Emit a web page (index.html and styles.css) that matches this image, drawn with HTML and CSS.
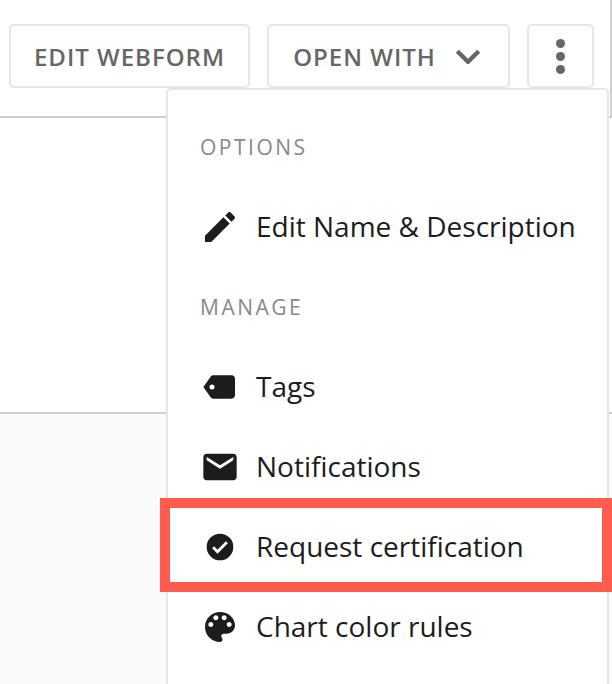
FILE: index.html
```html
<!DOCTYPE html>
<html lang="en">
<head>
<meta charset="utf-8">
<title>Menu</title>
<link rel="stylesheet" href="styles.css">
</head>
<body>
<div class="page">
  <header class="toolbar">
    <button class="btn btn-edit">EDIT WEBFORM</button>
    <button class="btn btn-open">OPEN WITH
      <svg class="chevron" viewBox="0 0 24 14"><path d="M2 2l10 10L22 2" fill="none" stroke="currentColor" stroke-width="4"/></svg>
    </button>
    <button class="btn btn-more" aria-label="More">
      <span class="dot"></span><span class="dot"></span><span class="dot"></span>
    </button>
  </header>
  <section class="panel"></section>
  <section class="footer-area"></section>

  <nav class="menu">
    <div class="heading">OPTIONS</div>
    <div class="item">
      <svg class="icon" viewBox="0 0 24 24"><path d="M3 17.25V21h3.75L17.81 9.94l-3.75-3.75L3 17.25zM20.71 7.04c.39-.39.39-1.02 0-1.41l-2.34-2.34c-.39-.39-1.02-.39-1.41 0l-1.83 1.83 3.75 3.75 1.83-1.83z"/></svg>
      <span class="label">Edit Name &amp; Description</span>
    </div>
    <div class="heading">MANAGE</div>
    <div class="item">
      <svg class="icon" viewBox="0 0 24 24"><path fill-rule="evenodd" d="M6.37 5.84C6.73 5.33 7.33 5 8 5l11 .01c1.1 0 2 .89 2 1.99v10c0 1.1-.9 1.99-2 1.99L8 19c-.67 0-1.27-.33-1.63-.84L2 12l4.37-6.16zM7.2 10.5a1.5 1.5 0 1 0 0 3 1.5 1.5 0 0 0 0-3z"/></svg>
      <span class="label">Tags</span>
    </div>
    <div class="item">
      <svg class="icon" viewBox="0 0 24 24"><path d="M20 4H4c-1.1 0-1.99.9-1.99 2L2 18c0 1.1.9 2 2 2h16c1.1 0 2-.9 2-2V6c0-1.1-.9-2-2-2zm0 4l-8 5-8-5V6l8 5 8-5v2z"/></svg>
      <span class="label">Notifications</span>
    </div>
    <div class="item">
      <svg class="icon" viewBox="0 0 30 30"><path fill-rule="evenodd" d="M15 5a10 10 0 1 0 0 20 10 10 0 0 0 0-20zm-1.9 15l-4-4 1.5-1.5 2.5 2.5 6.3-6.3 1.5 1.5-7.8 7.8z"/></svg>
      <span class="label">Request certification</span>
    </div>
    <div class="item">
      <svg class="icon" viewBox="0 0 24 24"><path d="M12 3c-4.97 0-9 4.03-9 9s4.03 9 9 9c.83 0 1.5-.67 1.5-1.5 0-.39-.15-.74-.39-1.01-.23-.26-.38-.61-.38-.99 0-.83.67-1.5 1.5-1.5H16c2.76 0 5-2.24 5-5 0-4.42-4.03-8-9-8zm-5.5 9c-.83 0-1.5-.67-1.5-1.5S5.67 9 6.5 9 8 9.67 8 10.5 7.33 12 6.5 12zm3-4C8.67 8 8 7.33 8 6.5S8.67 5 9.5 5s1.5.67 1.5 1.5S10.33 8 9.5 8zm5 0c-.83 0-1.5-.67-1.5-1.5S13.67 5 14.5 5s1.5.67 1.5 1.5S15.33 8 14.5 8zm3 4c-.83 0-1.5-.67-1.5-1.5S16.67 9 17.5 9s1.5.67 1.5 1.5-.67 1.5-1.5 1.5z"/></svg>
      <span class="label">Chart color rules</span>
    </div>
  </nav>
  <div class="highlight"></div>
</div>
</body>
</html>
```

FILE: styles.css
```css
* { box-sizing: border-box; }
html, body { margin: 0; padding: 0; height: 100%; overflow: hidden; background: #fff; }
.page {
  position: relative;
  width: 612px;
  height: 684px;
  overflow: hidden;
  display: flex;
  flex-direction: column;
  font-family: "Open Sans", sans-serif;
}
.toolbar {
  height: 118px;
  flex: none;
  display: flex;
  align-items: flex-start;
  gap: 17px;
  padding: 24px 0 0 9px;
  border-bottom: 2px solid #cfcfcf;
  border-right: 2px solid #d2d2d2;
}
.btn {
  height: 64px;
  background: #fff;
  border: 2px solid #e6e6e6;
  border-radius: 5px;
  color: #666;
  font-family: inherit;
  font-size: 24px;
  font-weight: 600;
  letter-spacing: 1px;
  display: flex;
  align-items: center;
  justify-content: center;
  padding: 0;
}
.btn-edit { width: 241px; }
.btn-open { width: 243px; gap: 19px; padding-right: 3px; }
.btn-more { width: 67px; flex-direction: column; gap: 4px; }
.chevron { width: 26px; height: 15px; color: #666; }
.dot { width: 9px; height: 9px; border-radius: 50%; background: #666; }
.panel { height: 296px; flex: none; border-bottom: 2px solid #cfcfcf; }
.footer-area { flex: 1; background: #fafafa; }
.menu {
  position: absolute;
  left: 166px;
  top: 88px;
  width: 443px;
  height: 640px;
  background: #fff;
  border: 2px solid #e6e6e6;
  border-radius: 5px;
  padding-top: 17px;
  padding-left: 32px;
}
.heading {
  height: 80px;
  display: flex;
  align-items: center;
  font-size: 21px;
  letter-spacing: 2.5px;
  color: #888;
}
.item {
  height: 80px;
  display: flex;
  align-items: center;
  gap: 16px;
  font-size: 28px;
  color: #1c1c1c;
}
.label { padding-bottom: 2px; }
.icon { width: 40px; height: 40px; flex: none; fill: #1c1c1c; }
.highlight {
  position: absolute;
  left: 160px;
  top: 498px;
  width: 452px;
  height: 94px;
  border: 10px solid #ff5b4f;
}
```
